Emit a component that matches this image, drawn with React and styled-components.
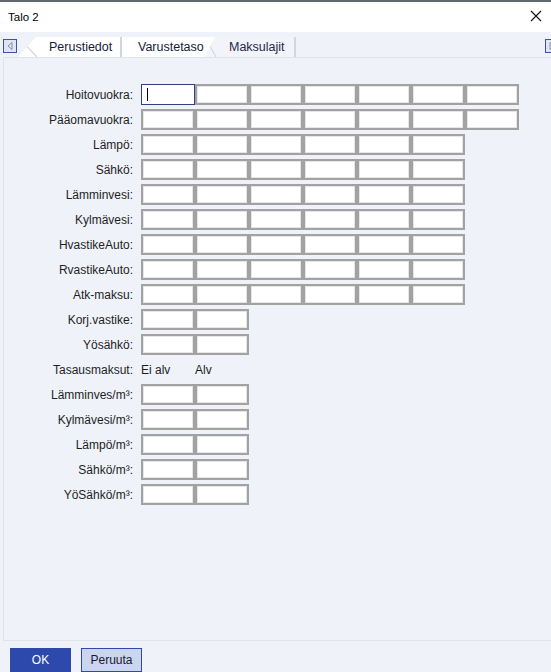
import React from "react";
import styled, { createGlobalStyle } from "styled-components";

const GlobalStyle = createGlobalStyle`
    html, body {
        margin: 0;
        padding: 0;
        background: #eff2f9;
        font-family: "Liberation Sans", Arial, sans-serif;
        overflow: hidden;
    }
`;

const rows = [
    { label: "Hoitovuokra:", count: 7, focused: true },
    { label: "Pääomavuokra:", count: 7 },
    { label: "Lämpö:", count: 6 },
    { label: "Sähkö:", count: 6 },
    { label: "Lämminvesi:", count: 6 },
    { label: "Kylmävesi:", count: 6 },
    { label: "HvastikeAuto:", count: 6 },
    { label: "RvastikeAuto:", count: 6 },
    { label: "Atk-maksu:", count: 6 },
    { label: "Korj.vastike:", count: 2 },
    { label: "Yösähkö:", count: 2 },
    { label: "Tasausmaksut:", headings: ["Ei alv", "Alv"] },
    { label: "Lämminves/m³:", count: 2 },
    { label: "Kylmävesi/m³:", count: 2 },
    { label: "Lämpö/m³:", count: 2 },
    { label: "Sähkö/m³:", count: 2 },
    { label: "YöSähkö/m³:", count: 2 },
];

function App() {
    return (
        <>
            <GlobalStyle />
            <Window>
                <TopEdge />
                <TitleBar>
                    <Title>Talo 2</Title>
                    <CloseIcon width="12" height="12" viewBox="0 0 12 12">
                        <path d="M1 1L11 11M11 1L1 11" stroke="#111" strokeWidth="1.1" />
                    </CloseIcon>
                </TitleBar>
                <TabBar>
                    <ArrowButton>
                        <svg width="6" height="8" viewBox="0 0 6 8">
                            <path d="M5 0.5L1 4L5 7.5Z" fill="none" stroke="#8a8f9c" strokeWidth="1" />
                        </svg>
                    </ArrowButton>
                    <Tabs>
                        <FirstTab>Perustiedot</FirstTab>
                        <MiddleTab>Varustetaso</MiddleTab>
                        <LastTab>Maksulajit</LastTab>
                    </Tabs>
                    <RightArrow>
                        <svg width="6" height="8" viewBox="0 0 6 8">
                            <path d="M1 0.5L5 4L1 7.5Z" fill="none" stroke="#8a8f9c" strokeWidth="1" />
                        </svg>
                    </RightArrow>
                </TabBar>
                <Panel>
                    <FormGrid>
                        {rows.map((row) => (
                            <FormRow key={row.label}>
                                <Label>{row.label}</Label>
                                <Fields>
                                    {row.headings
                                        ? row.headings.map((h) => (
                                              <Heading key={h}>{h}</Heading>
                                          ))
                                        : Array.from({ length: row.count }).map((_, i) => (
                                              <Field key={i} $focused={row.focused && i === 0}>
                                                  {row.focused && i === 0 && <Caret />}
                                              </Field>
                                          ))}
                                </Fields>
                            </FormRow>
                        ))}
                    </FormGrid>
                </Panel>
                <Footer>
                    <Button $primary>OK</Button>
                    <Button>Peruuta</Button>
                </Footer>
            </Window>
        </>
    );
}

export default App;

const Window = styled.div`
    width: 551px;
    height: 672px;
    display: flex;
    flex-direction: column;
    background: #eff2f9;
`;

const TopEdge = styled.div`
    height: 2px;
    background: #62666e;
`;

const TitleBar = styled.div`
    height: 30px;
    background: #ffffff;
    display: flex;
    align-items: center;
    justify-content: space-between;
    padding: 0 8px 0 8px;
`;

const Title = styled.span`
    font-size: 11.5px;
    color: #000;
`;

const CloseIcon = styled.svg`
    margin-right: 1px;
    margin-top: -2px;
`;

const TabBar = styled.div`
    display: flex;
    align-items: flex-end;
    height: 25px;
    padding-left: 3px;
`;

const ArrowButton = styled.div`
    width: 12px;
    height: 12px;
    border: 1px solid #3b52ad;
    background: #dfe5f5;
    display: flex;
    align-items: center;
    justify-content: center;
    margin-bottom: 4px;
`;

const RightArrow = styled(ArrowButton)`
    margin-left: auto;
    margin-right: -8px;
`;

const Tabs = styled.div`
    display: flex;
    height: 20px;
    margin-left: 1px;
`;

const TabBase = styled.div`
    height: 20px;
    display: flex;
    align-items: center;
    font-size: 12.5px;
    color: #161a3a;
    box-sizing: border-box;
`;

const FirstTab = styled(TabBase)`
    width: 104px;
    padding-left: 31px;
    background: linear-gradient(
            to top right,
            transparent calc(50% - 1px),
            #c9cdd6 50%,
            transparent calc(50% + 1px)
        )
        0 0 / 19px 20px no-repeat,
        #ffffff;
    clip-path: polygon(0 100%, 18px 0, 100% 0, 100% 100%);
    border-right: 2px solid #d3d6dd;
`;

const MiddleTab = styled(TabBase)`
    width: 93px;
    padding-left: 16px;
    background: #ffffff;
    clip-path: polygon(0 0, 100% 0, calc(100% - 10px) 100%, 0 100%);
`;

const LastTab = styled(TabBase)`
    width: 91px;
    margin-left: -10px;
    padding-left: 24px;
    color: #23284a;
    background: linear-gradient(
            to top right,
            transparent calc(50% - 1px),
            #cfd3dc 50%,
            transparent calc(50% + 1px)
        )
        0 0 / 11px 20px no-repeat,
        #f2f4f9;
    clip-path: polygon(0 100%, 10px 0, 100% 0, 100% 100%);
    border-right: 2px solid #d3d6dd;
`;

const Panel = styled.div`
    height: 584px;
    margin-left: 3px;
    border-top: 1px solid #dfe3ec;
    border-left: 1px solid #dfe3ec;
    border-bottom: 1px solid #dfe3ec;
    padding-top: 26px;
    box-sizing: border-box;
`;

const FormGrid = styled.div`
    display: flex;
    flex-direction: column;
    gap: 4px;
`;

const FormRow = styled.div`
    display: grid;
    grid-template-columns: 129px auto;
    column-gap: 8px;
    align-items: center;
    height: 21px;
`;

const Label = styled.div`
    text-align: right;
    font-size: 12px;
    color: #1e1e1e;
    white-space: nowrap;
`;

const Fields = styled.div`
    display: flex;
`;

const Field = styled.div`
    position: relative;
    width: 54px;
    height: 21px;
    box-sizing: border-box;
    background: #ffffff;
    border: ${(p) => (p.$focused ? "1.5px solid #2e3f8c" : "2px solid #a2a2a2")};
    ${(p) => !p.$focused && "box-shadow: inset 0 0 0 1px #e6e6e6;"}
`;

const Caret = styled.span`
    position: absolute;
    left: 5px;
    top: 3px;
    width: 1px;
    height: 13px;
    background: #000;
`;

const Heading = styled.div`
    width: 54px;
    font-size: 12px;
    color: #1e1e1e;
`;

const Footer = styled.div`
    display: flex;
    gap: 10px;
    padding: 7px 0 0 10px;
`;

const Button = styled.div`
    width: 61px;
    height: 24px;
    box-sizing: border-box;
    display: flex;
    align-items: center;
    justify-content: center;
    font-size: 12px;
    border: 1px solid #2c49ab;
    background: ${(p) => (p.$primary ? "#2c49ab" : "#cbd5ef")};
    color: ${(p) => (p.$primary ? "#ffffff" : "#1a1a2e")};
`;
